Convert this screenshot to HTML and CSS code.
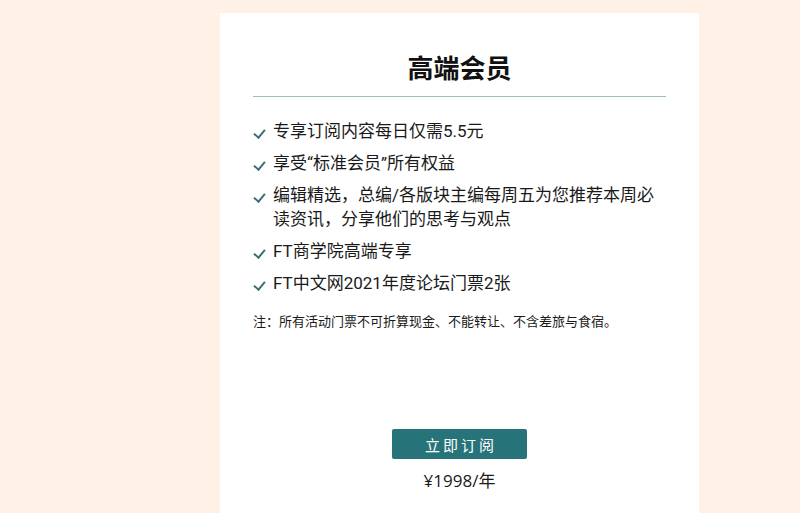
FILE: index.html
```html
<!DOCTYPE html>
<html lang="zh-CN">
<head>
    <meta charset="UTF-8">
    <meta name="viewport" content="width=device-width, initial-scale=1.0">
    <title>高端会员</title>
    <link rel="stylesheet" href="styles.css">
</head>
<body>
    <div class="card">
        <h1 class="title">高端会员</h1>
        <ul class="benefits">
            <li>专享订阅内容每日仅需5.5元</li>
            <li>享受“标准会员”所有权益</li>
            <li>编辑精选，总编/各版块主编每周五为您推荐本周必读资讯，分享他们的思考与观点</li>
            <li>FT商学院高端专享</li>
            <li>FT中文网2021年度论坛门票2张</li>
        </ul>
        <p class="note">注：所有活动门票不可折算现金、不能转让、不含差旅与食宿。</p>
        <div class="action">
            <button class="subscribe">立即订阅</button>
            <div class="price">¥1998/年</div>
        </div>
    </div>
</body>
</html>
```

FILE: styles.css
```css
body {
    margin: 0;
    padding: 0;
    background-color: #fff1e5;
    font-family: Roboto, "Noto Sans CJK SC", sans-serif;
    color: #1a1a1a;
}
.card {
    box-sizing: border-box;
    width: 479px;
    height: 500px;
    margin: 13px 0 0 220px;
    padding: 36px 33px 0 33px;
    background-color: #fff;
}
.title {
    margin: 0;
    font-family: "Noto Sans CJK SC", sans-serif;
    font-size: 26px;
    line-height: 36px;
    font-weight: bold;
    text-align: center;
    color: #111;
    padding-bottom: 11px;
    border-bottom: 1px solid #9fbfbf;
}
.benefits {
    list-style: none;
    margin: 22px 0 0 0;
    padding: 0;
}
.benefits li {
    position: relative;
    padding-left: 20px;
    font-size: 17px;
    line-height: 24px;
    margin-bottom: 8px;
}
.benefits li::before {
    content: "";
    position: absolute;
    left: 3px;
    top: 8px;
    width: 5px;
    height: 9px;
    border-right: 2px solid #3b6f74;
    border-bottom: 2px solid #3b6f74;
    transform: rotate(40deg);
}
.note {
    margin: 17px 0 0 0;
    font-size: 13px;
    line-height: 20px;
}
.action {
    margin-top: 97px;
    text-align: center;
}
.subscribe {
    width: 135px;
    height: 30px;
    border: none;
    border-radius: 2px;
    background-color: #26747a;
    color: #fff;
    font-family: "Noto Sans CJK SC", sans-serif;
    font-size: 15px;
    letter-spacing: 3px;
    padding: 0 0 0 3px;
    cursor: pointer;
}
.price {
    margin-top: 10px;
    font-family: "Open Sans", "Noto Sans CJK SC", sans-serif;
    font-size: 17px;
    line-height: 24px;
}
```
